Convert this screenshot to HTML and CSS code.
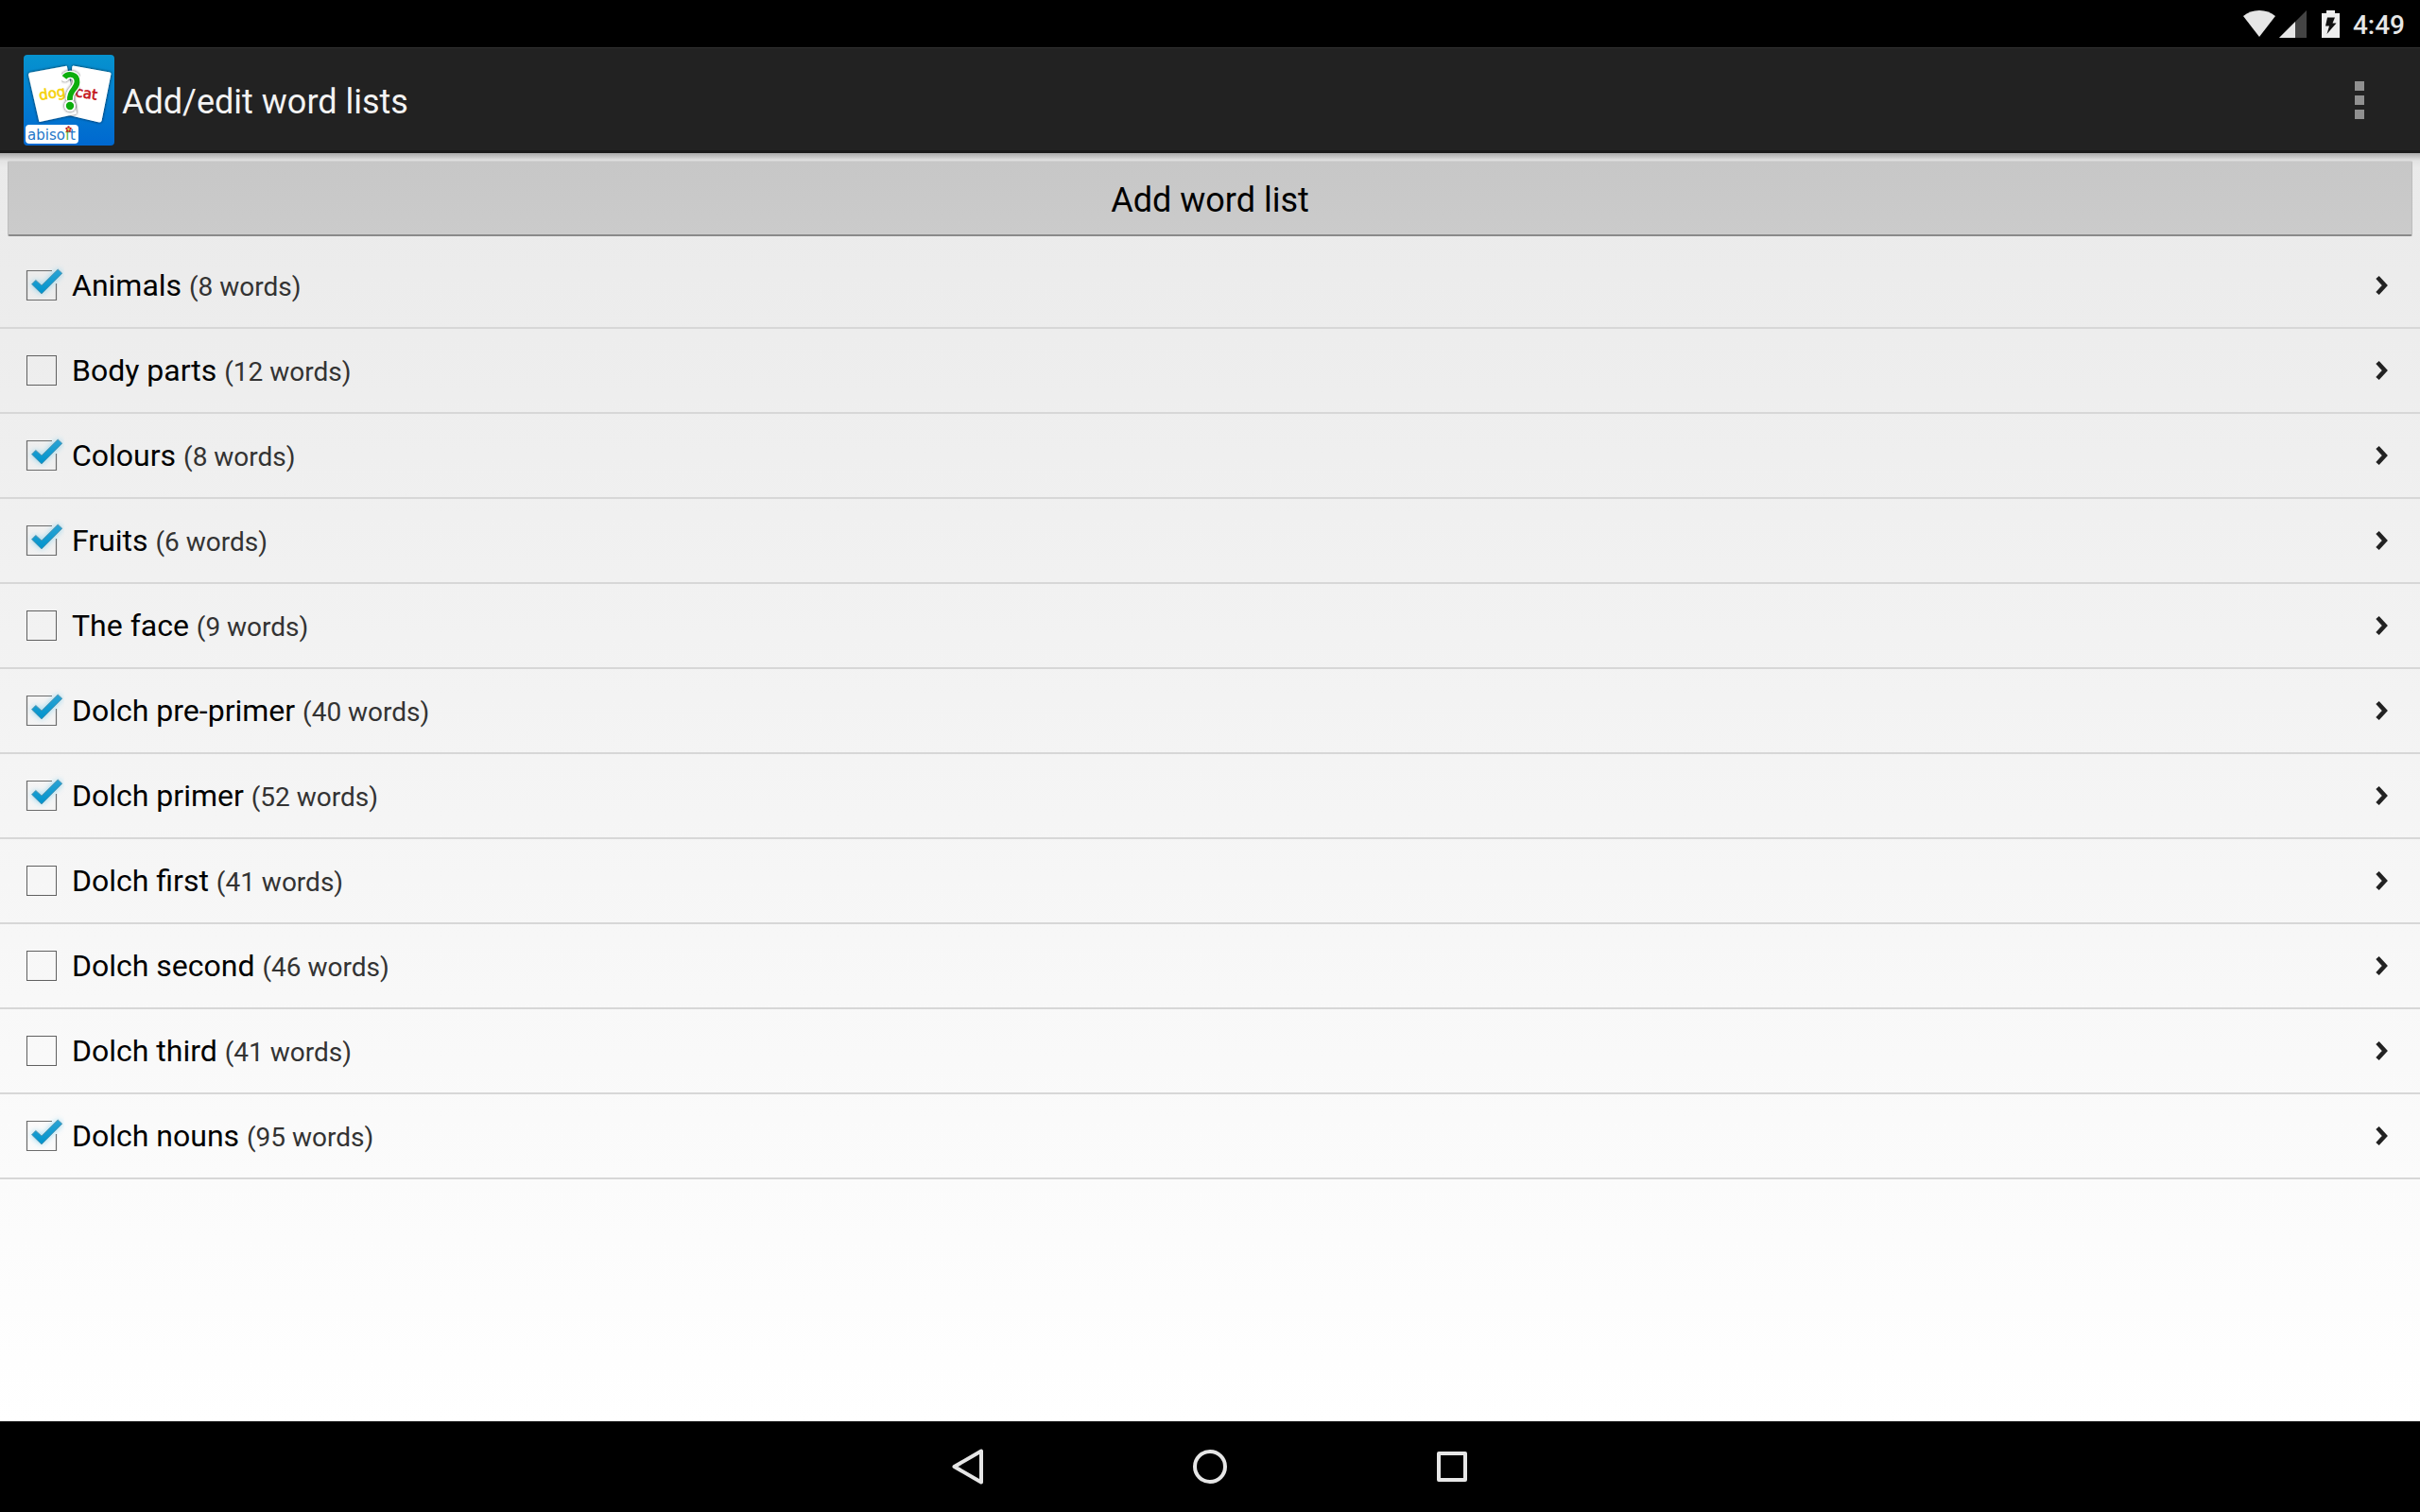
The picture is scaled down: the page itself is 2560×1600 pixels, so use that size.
FILE: index.html
```
<!DOCTYPE html>
<html lang="en">
<head>
    <meta charset="UTF-8">
    <meta name="viewport" content="width=device-width, initial-scale=1.0">
    <title>Add/edit word lists</title>
    <link rel="stylesheet" href="styles.css">
</head>
<body>
    <!-- Shared icons -->
    <svg class="sprite" aria-hidden="true">
        <defs>
            <filter id="glow" x="-50%" y="-50%" width="200%" height="200%">
                <feGaussianBlur stdDeviation="3"/>
            </filter>
            <linearGradient id="tick-fill" x1="0" y1="0" x2="0" y2="1">
                <stop offset="0" stop-color="#2ba3d4"/>
                <stop offset="1" stop-color="#0093cc"/>
            </linearGradient>
        </defs>
        <symbol id="tick" viewBox="0 0 48 48">
            <path d="M35 8.500H8.500V39.500H39.500V22" fill="none" stroke="#6c6c6c" stroke-width="1.200"/>
            <path d="M13 23 18 18 24 24 41 7 46 11 24 33Z" fill="#5cc4ec" opacity=".7" filter="url(#glow)"/>
            <path d="M13.500 22.800 17.800 18.400 24 24 41.200 7 45.800 11.200 24 33Z" fill="url(#tick-fill)" stroke="#5b93aa" stroke-width=".8"/>
        </symbol>
        <symbol id="chevron" viewBox="0 0 16 24">
            <path d="M3 3.500 10.800 12 3 20.500" fill="none" stroke="#222" stroke-width="4.600"/>
        </symbol>
    </svg>

    <div class="screen">
        <div class="status-bar">
            <svg class="wifi" viewBox="0 0 34 28" aria-label="Wi-Fi">
                <path d="M0 6Q7 0 17 0T34 6L17 28Z" fill="#e6e6e6"/>
            </svg>
            <svg class="signal" viewBox="0 0 29 29" aria-label="Signal">
                <path d="M29 0V29H0Z" fill="#444"/>
                <path d="M17 12V29H0Z" fill="#e6e6e6"/>
            </svg>
            <svg class="battery" viewBox="0 0 19 29" aria-label="Battery charging">
                <path d="M5 0H14V3H19V29H0V3H5Z" fill="#eee"/>
                <path d="M6 7.500H14L11.500 13.500H15.500L5.500 25 8 16.500H4Z" fill="#111"/>
            </svg>
            <span class="clock">4:49</span>
        </div>

        <header class="action-bar">
            <svg class="app-icon" viewBox="0 0 96 96" aria-hidden="true">
                <defs>
                    <linearGradient id="app-bg" x1="0" y1="0" x2="0" y2="1">
                        <stop offset="0" stop-color="#0693cf"/>
                        <stop offset="1" stop-color="#0068d0"/>
                    </linearGradient>
                    <filter id="card-shadow" x="-20%" y="-20%" width="140%" height="140%">
                        <feDropShadow dx="0" dy="0" stdDeviation="1.500" flood-color="#000" flood-opacity=".8"/>
                    </filter>
                </defs>
                <rect width="96" height="96" rx="4" fill="url(#app-bg)"/>
                <path d="M52 12 91 19Q92 19 92 20L82 70Q82 71 80 71L46 63Z" fill="#fff" stroke="#fff" stroke-linejoin="round" filter="url(#card-shadow)"/>
                <path d="M6 19 44 12Q46 11 46 13L56 61Q56 63 54 63L17 71Q16 71 16 69L5 21Z" fill="#fff" filter="url(#card-shadow)"/>
                <text class="icon-word dog" x="17" y="48" transform="rotate(-9 17 48)">dog</text>
                <text class="icon-word cat" x="54" y="44" transform="rotate(9 54 44)">cat</text>
                <g fill="none" stroke-linecap="round" filter="url(#card-shadow)">
                    <path d="M43.500 24C47 19 57 20 56.500 29 56 37 48 37 49 46" stroke="#fff" stroke-width="8.500"/>
                    <circle cx="49" cy="54" r="6" fill="#fff"/>
                </g>
                <path d="M43 24C47 19 57 20 56.500 29 56 37 48 37 49 48" fill="none" stroke="#0cae0c" stroke-width="5.800"/>
                <circle cx="49" cy="54" r="4.200" fill="#0cae0c"/>
                <rect x="2" y="74" width="56" height="20" rx="4" fill="#fff"/>
                <text class="icon-brand" x="4" y="90">abiso<tspan fill="#63b548">f</tspan>t</text>
                <g fill="#c22020">
                    <circle cx="47.500" cy="76.500" r="1.200"/>
                    <circle cx="49.500" cy="78" r="1.200"/>
                    <circle cx="48.700" cy="80.500" r="1.200"/>
                    <circle cx="46.200" cy="80.500" r="1.200"/>
                    <circle cx="45.500" cy="78" r="1.200"/>
                </g>
                <circle cx="47.500" cy="78.800" r="1" fill="#ffd92e"/>
            </svg>
            <h1>Add/edit word lists</h1>
            <button class="overflow" aria-label="More options">
                <span></span>
                <span></span>
                <span></span>
            </button>
        </header>

        <main class="content">
            <button class="add-list">Add word list</button>

            <ul class="word-lists">
                <li>
                    <label><span class="check"><input type="checkbox" checked><svg><use href="#tick"/></svg></span><span class="name">Animals <small>(8 words)</small></span></label>
                    <a href="#animals" aria-label="Edit Animals"><svg><use href="#chevron"/></svg></a>
                </li>
                <li>
                    <label><span class="check"><input type="checkbox"><svg><use href="#tick"/></svg></span><span class="name">Body parts <small>(12 words)</small></span></label>
                    <a href="#body-parts" aria-label="Edit Body parts"><svg><use href="#chevron"/></svg></a>
                </li>
                <li>
                    <label><span class="check"><input type="checkbox" checked><svg><use href="#tick"/></svg></span><span class="name">Colours <small>(8 words)</small></span></label>
                    <a href="#colours" aria-label="Edit Colours"><svg><use href="#chevron"/></svg></a>
                </li>
                <li>
                    <label><span class="check"><input type="checkbox" checked><svg><use href="#tick"/></svg></span><span class="name">Fruits <small>(6 words)</small></span></label>
                    <a href="#fruits" aria-label="Edit Fruits"><svg><use href="#chevron"/></svg></a>
                </li>
                <li>
                    <label><span class="check"><input type="checkbox"><svg><use href="#tick"/></svg></span><span class="name">The face <small>(9 words)</small></span></label>
                    <a href="#the-face" aria-label="Edit The face"><svg><use href="#chevron"/></svg></a>
                </li>
                <li>
                    <label><span class="check"><input type="checkbox" checked><svg><use href="#tick"/></svg></span><span class="name">Dolch pre-primer <small>(40 words)</small></span></label>
                    <a href="#dolch-pre-primer" aria-label="Edit Dolch pre-primer"><svg><use href="#chevron"/></svg></a>
                </li>
                <li>
                    <label><span class="check"><input type="checkbox" checked><svg><use href="#tick"/></svg></span><span class="name">Dolch primer <small>(52 words)</small></span></label>
                    <a href="#dolch-primer" aria-label="Edit Dolch primer"><svg><use href="#chevron"/></svg></a>
                </li>
                <li>
                    <label><span class="check"><input type="checkbox"><svg><use href="#tick"/></svg></span><span class="name">Dolch first <small>(41 words)</small></span></label>
                    <a href="#dolch-first" aria-label="Edit Dolch first"><svg><use href="#chevron"/></svg></a>
                </li>
                <li>
                    <label><span class="check"><input type="checkbox"><svg><use href="#tick"/></svg></span><span class="name">Dolch second <small>(46 words)</small></span></label>
                    <a href="#dolch-second" aria-label="Edit Dolch second"><svg><use href="#chevron"/></svg></a>
                </li>
                <li>
                    <label><span class="check"><input type="checkbox"><svg><use href="#tick"/></svg></span><span class="name">Dolch third <small>(41 words)</small></span></label>
                    <a href="#dolch-third" aria-label="Edit Dolch third"><svg><use href="#chevron"/></svg></a>
                </li>
                <li>
                    <label><span class="check"><input type="checkbox" checked><svg><use href="#tick"/></svg></span><span class="name">Dolch nouns <small>(95 words)</small></span></label>
                    <a href="#dolch-nouns" aria-label="Edit Dolch nouns"><svg><use href="#chevron"/></svg></a>
                </li>
            </ul>
        </main>

        <nav class="nav-bar">
            <button aria-label="Back">
                <svg viewBox="0 0 40 40"><path d="M5.500 20 34 3.500V36.500Z"/></svg>
            </button>
            <button aria-label="Home">
                <svg viewBox="0 0 40 40"><circle cx="20" cy="20" r="16"/></svg>
            </button>
            <button aria-label="Recent apps">
                <svg viewBox="0 0 40 40"><rect x="6" y="6" width="28" height="28"/></svg>
            </button>
        </nav>
    </div>
</body>
</html>
```
FILE: styles.css
```
:root {
    --bar: #222;
    --light: #f3f3f3;
    --divider: #d7d7d7;
}

* {
    margin: 0;
    padding: 0;
    box-sizing: border-box;
}

body {
    font-family: Roboto, sans-serif;
    background: #000;
    color: #000;
}

button {
    border: none;
    background: none;
    font: inherit;
    cursor: pointer;
}

svg {
    display: block;
}

.sprite {
    position: absolute;
    width: 0;
    height: 0;
}

.screen {
    display: flex;
    flex-direction: column;
    min-height: 100vh;
}

/* Status bar */
.status-bar {
    display: flex;
    justify-content: flex-end;
    align-items: center;
    height: 50px;
    padding-right: 16px;
    background: #000;
}

.wifi {
    width: 34px;
    height: 28px;
    margin-right: 4px;
}

.signal {
    width: 29px;
    height: 29px;
    margin-right: 16px;
}

.battery {
    width: 19px;
    height: 29px;
    margin-right: 14px;
}

.clock {
    font-size: 28px;
    font-weight: 500;
    line-height: 32px;
    padding-top: 4px;
    color: #e6e6e6;
}

/* Action bar */
.action-bar {
    display: flex;
    align-items: center;
    height: 112px;
    padding: 0 48px 0 25px;
    background: var(--bar);
    box-shadow: inset 0 1px #303030, inset 0 -3px #1a1a1a;
}

.app-icon {
    width: 96px;
    height: 96px;
}

.icon-word {
    font-family: "DejaVu Sans", sans-serif;
    font-size: 15px;
    stroke-width: 0.6px;
}

.dog {
    fill: #f5d20a;
    stroke: #f5d20a;
}

.cat {
    fill: #c4151a;
    stroke: #c4151a;
}

.icon-brand {
    font-family: "DejaVu Sans", sans-serif;
    font-size: 15px;
    fill: #2577c8;
}

.action-bar h1 {
    flex: 1;
    margin-left: 8px;
    padding-top: 4px;
    font-size: 36px;
    font-weight: 400;
    line-height: 44px;
    color: var(--light);
}

.overflow {
    display: flex;
    flex-direction: column;
    align-items: center;
    gap: 5px;
    width: 32px;
}

.overflow span {
    width: 10px;
    height: 10px;
    background: #909090;
}

/* Content */
.content {
    flex: 1;
    padding-top: 8px;
    background:
        linear-gradient(rgba(0, 0, 0, 0.28), rgba(0, 0, 0, 0.03) 8px, transparent 16px),
        linear-gradient(#eaeaea, #fff);
}

.add-list {
    display: block;
    width: calc(100% - 16px);
    height: 80px;
    margin: 0 8px 8px;
    padding-top: 4px;
    border: 1px solid #bdbdbd;
    border-top-color: #d2d2d2;
    border-bottom: 2px solid #8a8a8a;
    border-radius: 2px;
    background: linear-gradient(#c7c7c7, #cbcbcb);
    font-size: 36px;
    line-height: 44px;
    color: #000;
}

.word-lists {
    list-style: none;
}

.word-lists li {
    display: flex;
    align-items: center;
    height: 90px;
    border-bottom: 2px solid var(--divider);
}

.word-lists label {
    flex: 1;
    display: flex;
    align-items: center;
    gap: 16px;
    padding-left: 28px;
    cursor: pointer;
}

.check {
    position: relative;
    width: 32px;
    height: 32px;
}

.check input {
    appearance: none;
    display: block;
    width: 32px;
    height: 32px;
    border: 1px solid #606060;
}

.check svg {
    display: none;
    position: absolute;
    top: -8px;
    left: -8px;
    width: 48px;
    height: 48px;
    pointer-events: none;
}

.check input:checked {
    border-color: transparent;
}

.check input:checked + svg {
    display: block;
}

.name {
    padding-top: 2px;
    font-size: 32px;
    line-height: 40px;
}

.name small {
    font-size: 28px;
    color: #333;
}

.word-lists a {
    padding: 24px 32px;
}

.word-lists a svg {
    width: 16px;
    height: 24px;
}

/* Navigation bar */
.nav-bar {
    display: flex;
    justify-content: center;
    height: 96px;
    background: #000;
}

.nav-bar button {
    display: flex;
    align-items: center;
    justify-content: center;
    width: 256px;
}

.nav-bar svg {
    width: 40px;
    height: 40px;
    fill: none;
    stroke: #e6e6e6;
    stroke-width: 4px;
    stroke-linejoin: round;
}
```
